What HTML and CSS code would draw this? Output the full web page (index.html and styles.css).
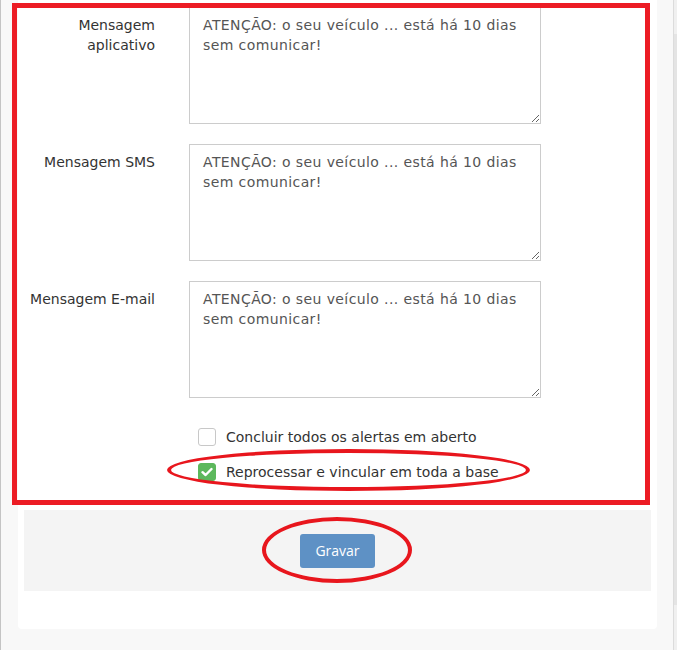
FILE: index.html
```html
<!DOCTYPE html>
<html lang="pt">
<head>
<meta charset="utf-8">
<link rel="stylesheet" href="styles.css">
</head>
<body>
<div class="page">
  <div class="panel">
    <div class="form">
      <div class="row">
        <label class="lbl">Mensagem<br>aplicativo</label>
        <textarea class="ta">ATENÇÃO: o seu veículo ... está há 10 dias sem comunicar!</textarea>
      </div>
      <div class="row">
        <label class="lbl">Mensagem SMS</label>
        <textarea class="ta">ATENÇÃO: o seu veículo ... está há 10 dias sem comunicar!</textarea>
      </div>
      <div class="row">
        <label class="lbl">Mensagem E-mail</label>
        <textarea class="ta">ATENÇÃO: o seu veículo ... está há 10 dias sem comunicar!</textarea>
      </div>
      <div class="checks">
        <div class="check"><span class="box"></span><span class="ctext">Concluir todos os alertas em aberto</span></div>
        <div class="check"><span class="box on"><svg width="12" height="10" viewBox="0 0 12 10"><path d="M1.5 5.2 L4.6 8 L10.5 2" fill="none" stroke="#fff" stroke-width="2.4" stroke-linecap="round" stroke-linejoin="round"/></svg></span><span class="ctext">Reprocessar e vincular em toda a base</span></div>
      </div>
    </div>
    <div class="footer">
      <button class="btn">Gravar</button>
    </div>
  </div>
</div>
<div class="scrollbar"><div class="thumb"></div></div>
<div class="mark-rect"></div>
<div class="mark-ellipse e1"></div>
<div class="mark-ellipse e2"></div>
</body>
</html>
```
FILE: styles.css
```css
html, body { margin: 0; padding: 0; height: 100%; overflow: hidden; }
body {
  position: relative;
  display: flex;
  background: #f8f8f8;
  border-left: 1px solid #c4c4c4;
  font-family: "DejaVu Sans", Verdana, sans-serif;
  font-size: 14px;
  color: #333;
}
.page { flex: 1; padding-left: 17px; }
.panel {
  width: 639px;
  height: 629px;
  background: #fff;
  border-radius: 0 0 4px 4px;
  display: flex;
  flex-direction: column;
}
.form { padding-top: 7px; }
.row {
  display: grid;
  grid-template-columns: 137px 352px;
  column-gap: 34px;
  margin-bottom: 20px;
}
.lbl {
  text-align: right;
  padding-top: 8px;
  line-height: 20px;
  color: #333;
}
.ta {
  box-sizing: border-box;
  width: 352px;
  height: 117px;
  border: 1px solid #ccc;
  border-radius: 0;
  padding: 7px 13px;
  font-family: "DejaVu Sans", Verdana, sans-serif;
  font-size: 14px;
  letter-spacing: 0.4px;
  line-height: 20px;
  color: #555;
  margin: 0;
  resize: vertical;
  outline: none;
}
.checks {
  margin-top: 30px;
  padding-left: 180px;
  display: flex;
  flex-direction: column;
  gap: 17px;
}
.check { display: flex; align-items: center; gap: 10px; height: 18px; }
.box {
  box-sizing: border-box;
  width: 18px; height: 18px;
  border: 1px solid #c8c8c8;
  border-radius: 3px;
  background: #fff;
  display: flex; align-items: center; justify-content: center;
}
.box.on { background: #5cb85c; border-color: #5cb85c; }
.ctext { color: #333; font-size: 14px; }
.footer {
  margin: 29px 6px 0;
  height: 81px;
  background: #f4f4f4;
  display: flex;
  align-items: center;
  justify-content: center;
}
.btn {
  width: 75px; height: 34px;
  background: #5e91c5;
  border: none;
  border-radius: 3px;
  color: #fff;
  font-family: "Open Sans", sans-serif;
  font-size: 14px;
}
.scrollbar {
  width: 3px;
  border-left: 1px solid #dcdcdc;
  background: #f0f0f0;
  padding-top: 34px;
}
.thumb { height: 571px; background: #e4e4e4; }
.mark-rect {
  position: absolute;
  left: 11px; top: 3px;
  width: 628px; height: 492px;
  border: 5px solid #ec1c24;
}
.mark-ellipse {
  position: absolute;
  border: 4px solid #e8161d;
  border-radius: 50%;
  box-sizing: border-box;
}
.e1 { left: 166px; top: 449px; width: 363px; height: 42px; }
.e2 { left: 261px; top: 517px; width: 150px; height: 66px; }
```
